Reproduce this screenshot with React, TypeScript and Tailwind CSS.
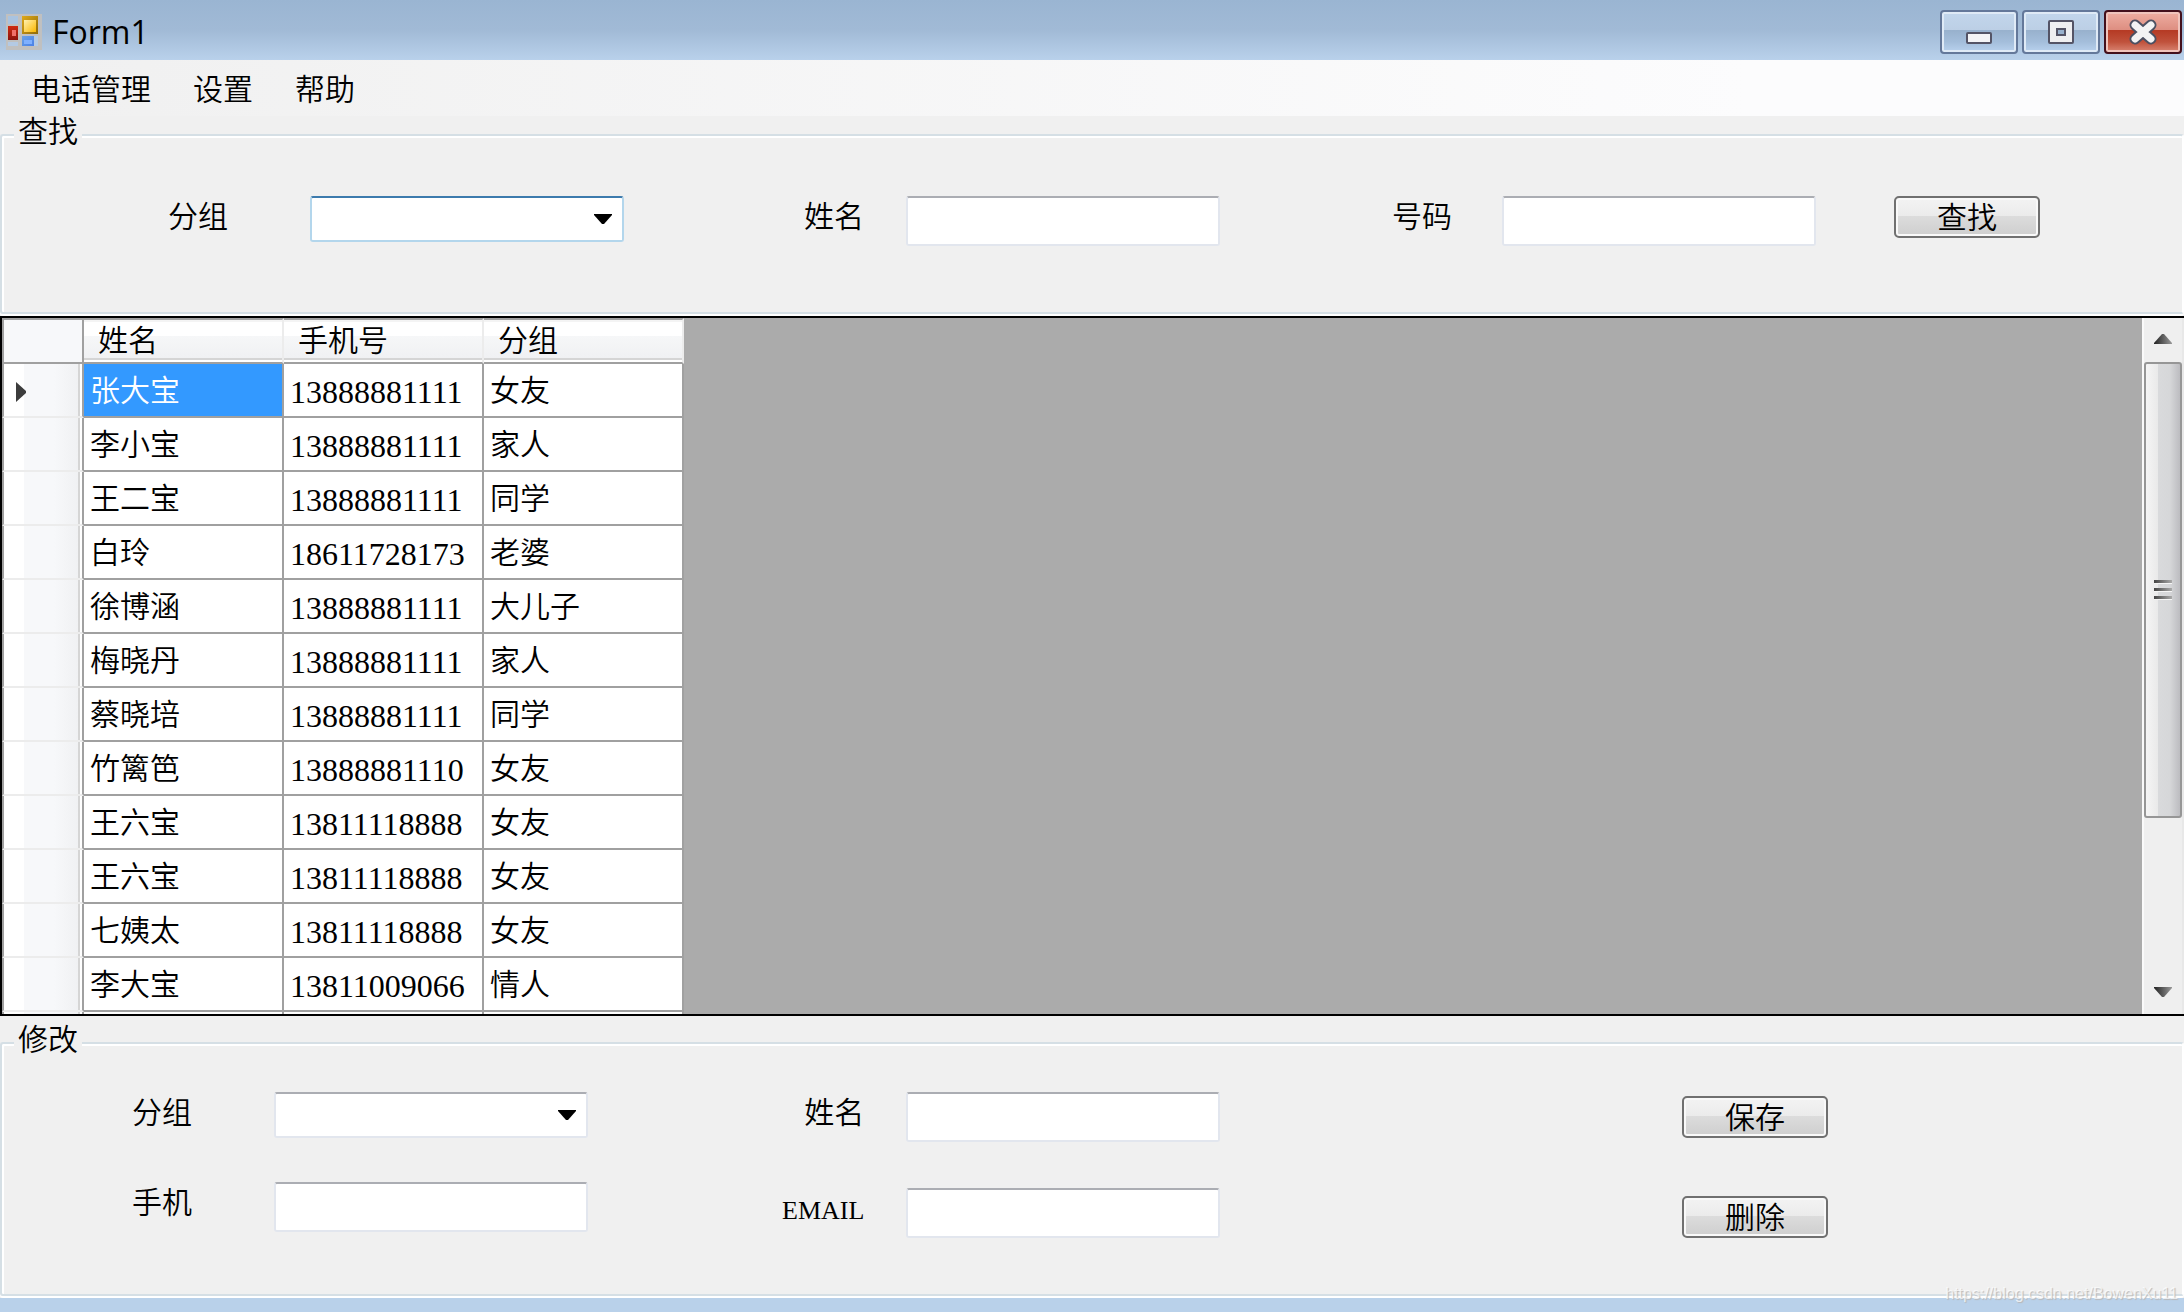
import React from "react";

type Contact = { name: string; phone: string; group: string };

const contacts: Contact[] = [
  { name: "张大宝", phone: "13888881111", group: "女友" },
  { name: "李小宝", phone: "13888881111", group: "家人" },
  { name: "王二宝", phone: "13888881111", group: "同学" },
  { name: "白玲", phone: "18611728173", group: "老婆" },
  { name: "徐博涵", phone: "13888881111", group: "大儿子" },
  { name: "梅晓丹", phone: "13888881111", group: "家人" },
  { name: "蔡晓培", phone: "13888881111", group: "同学" },
  { name: "竹篱笆", phone: "13888881110", group: "女友" },
  { name: "王六宝", phone: "13811118888", group: "女友" },
  { name: "王六宝", phone: "13811118888", group: "女友" },
  { name: "七姨太", phone: "13811118888", group: "女友" },
  { name: "李大宝", phone: "13811009066", group: "情人" },
];

function AppIcon() {
  return (
    <svg width="36" height="36" viewBox="0 0 36 36" shapeRendering="crispEdges" aria-hidden="true">
      <defs>
        <linearGradient id="gold" x1="0" y1="0" x2="1" y2="1">
          <stop offset="0" stopColor="#fff0b0" />
          <stop offset="1" stopColor="#fbb800" />
        </linearGradient>
        <linearGradient id="goldEdge" x1="0" y1="0" x2="1" y2="1">
          <stop offset="0" stopColor="#dfa91a" />
          <stop offset="1" stopColor="#8f6a08" />
        </linearGradient>
        <linearGradient id="red" x1="0" y1="0" x2="0" y2="1">
          <stop offset="0" stopColor="#cf2a10" />
          <stop offset="1" stopColor="#8c1410" />
        </linearGradient>
        <linearGradient id="blue" x1="0" y1="0" x2="1" y2="1">
          <stop offset="0" stopColor="#6aa2e4" />
          <stop offset="1" stopColor="#4a80e8" />
        </linearGradient>
      </defs>
      <rect width="36" height="36" fill="#c0c0c0" />
      <rect x="2" y="2" width="10" height="8" fill="#a9c3e0" />
      <rect x="2" y="28" width="10" height="4" fill="#b4cae4" />
      <rect x="28" y="22" width="4" height="10" fill="#b4cae4" />
      <rect x="16" y="2" width="16" height="18" fill="url(#goldEdge)" />
      <rect x="18" y="6" width="12" height="12" fill="url(#gold)" />
      <rect x="2" y="12" width="10" height="14" fill="url(#red)" />
      <rect x="6" y="16" width="4" height="6" fill="#f0706a" />
      <rect x="16" y="22" width="12" height="10" fill="url(#blue)" />
      <rect x="18" y="26" width="8" height="4" fill="#7fb0ff" />
    </svg>
  );
}

function WindowButton({ label, close, children }: { label: string; close?: boolean; children: React.ReactNode }) {
  const tone = close
    ? "border-[#43101c] bg-[linear-gradient(#eeaea2,#dd8d80_46%,#b53a24_46%,#c0523c_75%,#d98674)] shadow-[inset_0_0_0_2px_#f0c4bc]"
    : "border-[#64789a] bg-[linear-gradient(#c2d6ec,#bccfe5_46%,#98b1cd_46%,#a4bedb_75%,#b9d2ee)] shadow-[inset_0_0_0_2px_#dfeaf6]";
  return (
    <button type="button" aria-label={label} className={`flex h-11 w-[78px] items-center justify-center rounded-[4px] border-2 ${tone}`}>
      {children}
    </button>
  );
}

function TitleBar() {
  return (
    <header className="flex h-[60px] shrink-0 items-center justify-between bg-[linear-gradient(#9ab5d2,#a1bad6_50%,#b9d1eb)] pl-1.5 pr-0.5">
      <div className="flex items-center gap-2.5 pt-1">
        <AppIcon />
        <h1 className="text-[32px] leading-9 font-['Open_Sans','Noto_Sans',sans-serif]">Form1</h1>
      </div>
      <div className="flex gap-1 pt-1">
        <WindowButton label="最小化">
          <svg width="26" height="44" viewBox="0 0 26 44" aria-hidden="true">
            <rect x="1" y="23" width="24" height="10" rx="1" fill="#f4f4f6" stroke="#545466" strokeWidth="2" />
          </svg>
        </WindowButton>
        <WindowButton label="最大化">
          <svg width="26" height="44" viewBox="0 0 26 44" aria-hidden="true">
            <rect x="1" y="11" width="24" height="22" rx="1" fill="#efeff1" stroke="#545466" strokeWidth="2" />
            <rect x="9" y="19" width="8" height="6" fill="#98b1cd" stroke="#545466" strokeWidth="2" />
          </svg>
        </WindowButton>
        <WindowButton label="关闭" close>
          <svg width="28" height="26" viewBox="0 0 28 26" strokeLinecap="round" aria-hidden="true">
            <path d="M6 6 22 20M22 6 6 20" stroke="#4c5062" strokeWidth="11" />
            <path d="M6 6 22 20M22 6 6 20" stroke="#f3f3f4" strokeWidth="7" />
          </svg>
        </WindowButton>
      </div>
    </header>
  );
}

function MenuBar() {
  return (
    <nav className="flex h-14 shrink-0 items-center gap-[42px] bg-[linear-gradient(90deg,#f0f0f0,#fcfcfd_80%)] pb-0.5 pl-[31px]">
      {["电话管理", "设置", "帮助"].map((item) => (
        <button key={item} type="button" className="text-[30px] leading-10 font-[350]">
          {item}
        </button>
      ))}
    </nav>
  );
}

function GroupBox({ title, className, children }: { title: string; className: string; children: React.ReactNode }) {
  return (
    <fieldset
      className={`mb-0.5 min-w-0 shrink-0 rounded-[3px] border-2 border-[#d5dfe5] border-r-white shadow-[inset_2px_2px_0_#fff,0_2px_0_#fff] ${className}`}
    >
      <legend className="ml-3 bg-[#f0f0f0] px-1 pb-3 text-[30px] leading-[26px] font-[350]">{title}</legend>
      {children}
    </fieldset>
  );
}

function Label({ id, className = "", children }: { id: string; className?: string; children: React.ReactNode }) {
  return (
    <label htmlFor={id} className={`text-[30px] leading-9 font-[350] whitespace-nowrap ${className}`}>
      {children}
    </label>
  );
}

const plainEdge = "border-[#e2e6ee] border-t-[#abadb3]";
const hotEdge = "border-[#b3d6ec] border-t-[#3d7bad]";

function TextBox({ id }: { id: string }) {
  return <input id={id} type="text" className={`h-[50px] w-full rounded-[3px] border-2 bg-white px-2 text-[30px] ${plainEdge}`} />;
}

function ComboBox({ id, hot }: { id: string; hot?: boolean }) {
  return (
    <div className="relative h-[46px] w-full">
      <select id={id} className={`h-full w-full appearance-none rounded-[3px] border-2 bg-white px-2 text-[28px] ${hot ? hotEdge : plainEdge}`}>
        <option value=""></option>
        <option>女友</option>
        <option>家人</option>
        <option>同学</option>
      </select>
      <svg className="pointer-events-none absolute top-[18px] right-3" width="18" height="10" viewBox="0 0 18 10" aria-hidden="true">
        <path d="M0 0h18v1L10 10H8L0 1z" />
      </svg>
    </div>
  );
}

function PushButton({ children }: { children: React.ReactNode }) {
  return (
    <button
      type="button"
      className="flex h-[42px] w-full items-center justify-center rounded-[5px] border-2 border-[#707070] bg-[linear-gradient(#f3f3f3,#ebebeb_48%,#dcdcdc_48%,#cecece)] pb-1 text-[30px] leading-9 font-[350] shadow-[inset_0_0_0_2px_#f9f9f9]"
    >
      {children}
    </button>
  );
}

function SearchPanel() {
  return (
    <GroupBox title="查找" className="h-[198px]">
      <div className="grid grid-cols-[166fr_142fr_314fr_180fr_102fr_314fr_172fr_110fr_314fr_78fr_146fr_142fr] items-start pt-[42px]">
        <Label id="search-group" className="col-start-2">分组</Label>
        <ComboBox id="search-group" hot />
        <Label id="search-name" className="col-start-5">姓名</Label>
        <TextBox id="search-name" />
        <Label id="search-number" className="col-start-8">号码</Label>
        <TextBox id="search-number" />
        <div className="col-start-11">
          <PushButton>查找</PushButton>
        </div>
      </div>
    </GroupBox>
  );
}

const headCell =
  "border-y-2 border-[#a0a0a0] border-r-2 border-r-[#ececec] bg-[linear-gradient(#f4f4f4_2px,#fff_2px,#fff_16px,#f6f7f8_16px,#f0f1f3_38px,#d5d5d5_38px,#d5d5d5_40px,#fff_40px)] px-3.5 pb-1.5 text-left text-[30px] leading-9 font-[350]";
const bodyCell = "border-r-2 border-b-2 border-[#a0a0a0] px-1.5";

function RowHeader({ current }: { current?: boolean }) {
  return (
    <th
      scope="row"
      className="border-r-2 border-b-2 border-l-2 border-r-[#a0a0a0] border-b-[#ececec] border-l-[#a0a0a0] bg-[linear-gradient(90deg,#fff_20px,#f7f8fa_20px,#f7f8fa_50px,#f0f1f3_74px,#d5d5d5_74px,#d5d5d5_76px,#fff_76px)] px-0 pt-1 pb-0"
    >
      {current && (
        <svg className="ml-3" width="10" height="20" viewBox="0 0 10 20" aria-label="当前行">
          <path d="M0 0 10 9v2L0 20z" fill="#3c3c3c" />
        </svg>
      )}
    </th>
  );
}

function ScrollBar() {
  return (
    <div
      role="scrollbar"
      aria-orientation="vertical"
      aria-controls="contacts"
      aria-valuenow={0}
      className="flex w-[42px] shrink-0 flex-col border-r-2 border-l-2 border-l-[#fafafa] border-r-[#e8e8e8] bg-[#efefef]"
    >
      <button type="button" aria-label="向上滚动" className="flex h-11 shrink-0 items-center justify-center pb-0.5">
        <svg width="18" height="10" viewBox="0 0 18 10" aria-hidden="true">
          <defs>
            <linearGradient id="arrow">
              <stop offset="0" stopColor="#222" />
              <stop offset="1" stopColor="#999" />
            </linearGradient>
          </defs>
          <path d="M8 0h2l8 9v1H0V9z" fill="url(#arrow)" />
        </svg>
      </button>
      <div className="flex min-h-0 flex-1 flex-col">
        <div className="flex h-[75%] flex-col items-center justify-center gap-1 rounded-[3px] border-2 border-[#969696] bg-[linear-gradient(90deg,#f5f5f5,#e9e9e9_36%,#d9dadc_36%,#d6d7d9_70%,#bcbcc0)]">
          {[0, 1, 2].map((line) => (
            <span key={line} className="h-1 w-[18px] border-b border-[#f5f5f5] bg-[linear-gradient(90deg,#444,#aaa)]" />
          ))}
        </div>
      </div>
      <button type="button" aria-label="向下滚动" className="flex h-11 shrink-0 items-center justify-center">
        <svg width="18" height="10" viewBox="0 0 18 10" aria-hidden="true">
          <path d="M0 0h18v1L10 10H8L0 1z" fill="url(#arrow)" />
        </svg>
      </button>
    </div>
  );
}

function ContactGrid() {
  return (
    <section className="flex min-h-0 flex-1 border-y-2 border-l-2 border-black bg-[#ababab]">
      <div className="min-w-0 flex-1 overflow-hidden">
        <table id="contacts" className="w-[682px] table-fixed border-separate border-spacing-0">
          <colgroup>
            <col className="w-[82px]" />
            <col className="w-[200px]" />
            <col className="w-[200px]" />
            <col className="w-[200px]" />
          </colgroup>
          <thead>
            <tr className="h-[46px]">
              <td className="border-2 border-[#a0a0a0] bg-[#f7f8fa]" />
              <th scope="col" className={headCell}>姓名</th>
              <th scope="col" className={headCell}>手机号</th>
              <th scope="col" className={headCell}>分组</th>
            </tr>
          </thead>
          <tbody>
            {contacts.map((c, i) => (
              <tr key={i} className="h-[54px] bg-white text-[30px] leading-10 font-[350]">
                <RowHeader current={i === 0} />
                <td className={i === 0 ? `${bodyCell} bg-[#3399ff] pb-1 text-white` : `${bodyCell} pb-1`}>{c.name}</td>
                <td className={`${bodyCell} pt-1 font-['Liberation_Serif',serif] text-[32px]`}>{c.phone}</td>
                <td className={`${bodyCell} pb-1`}>{c.group}</td>
              </tr>
            ))}
            <tr className="h-[54px] bg-white">
              <RowHeader />
              <td className={bodyCell} />
              <td className={bodyCell} />
              <td className={bodyCell} />
            </tr>
          </tbody>
        </table>
      </div>
      <ScrollBar />
    </section>
  );
}

function EditPanel() {
  return (
    <GroupBox title="修改" className="mt-2 h-[272px]">
      <div className="grid grid-cols-[130fr_456fr_194fr_438fr_462fr_146fr_354fr] pt-[30px]">
        <div className="col-start-2 grid grid-cols-[142fr_314fr] content-start items-start gap-y-11">
          <Label id="edit-group">分组</Label>
          <ComboBox id="edit-group" />
          <Label id="edit-phone">手机</Label>
          <TextBox id="edit-phone" />
        </div>
        <div className="col-start-4 grid grid-cols-[124fr_314fr] content-start items-start gap-y-[46px]">
          <Label id="edit-name" className="pr-[42px] text-right">姓名</Label>
          <TextBox id="edit-name" />
          <Label id="edit-email" className="pr-[42px] text-right">
            <span className="font-['Liberation_Serif',serif] text-[26px] font-normal">EMAIL</span>
          </Label>
          <TextBox id="edit-email" />
        </div>
        <div className="col-start-6 flex flex-col gap-[58px] pt-1">
          <PushButton>保存</PushButton>
          <PushButton>删除</PushButton>
        </div>
      </div>
    </GroupBox>
  );
}

export default function App() {
  return (
    <div className="relative flex h-screen flex-col overflow-hidden bg-[#f0f0f0] text-black font-['Noto_Sans_CJK_SC',sans-serif]">
      <TitleBar />
      <MenuBar />
      <SearchPanel />
      <ContactGrid />
      <EditPanel />
      <div className="h-3.5 shrink-0 bg-[#b9d1ea]" />
      <span className="absolute right-1.5 bottom-2 text-base leading-5 text-white/70 font-['Liberation_Sans',sans-serif] [text-shadow:1px_1px_1px_#b8b8b8]">
        https://blog.csdn.net/BowenXu11
      </span>
    </div>
  );
}
